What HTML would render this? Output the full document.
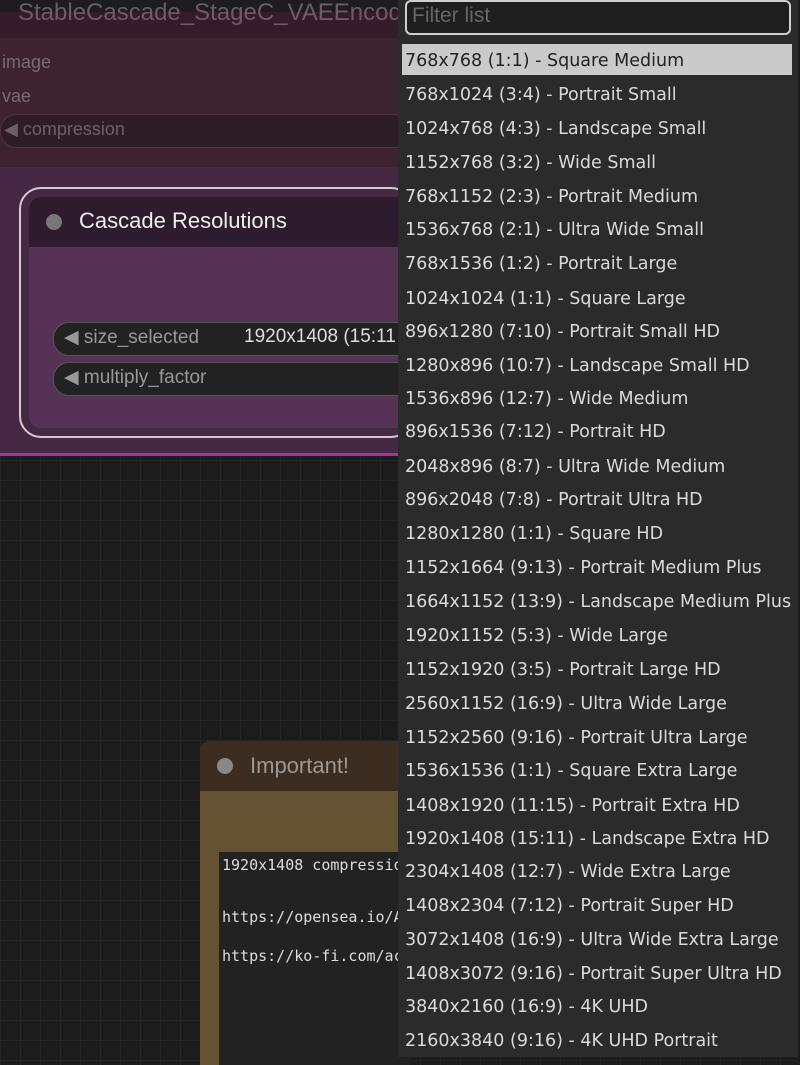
<!DOCTYPE html><html><head><style>
body{margin:0;width:800px;height:1065px;overflow:hidden;background:#1c1c1c;font-family:"Liberation Sans",sans-serif;position:relative;
background-image:linear-gradient(#262626 1px,transparent 1px),linear-gradient(90deg,#262626 1px,transparent 1px);background-size:20px 20px}
.a{position:absolute}
.menu div{position:absolute;left:7px;height:28px;line-height:28px;color:#dadada;white-space:nowrap;font-family:"DejaVu Sans","Liberation Sans",sans-serif;font-size:17.5px}
</style></head><body>
<div class="a" style="left:0;top:0;width:400px;height:12px;background:#1d1d1d"></div>
<div class="a" style="left:0;top:12px;width:400px;height:155px;background:#3d2230"></div>
<div class="a" style="left:0;top:12px;width:400px;height:26px;background:#361c2a"></div>
<div class="a" style="left:18px;top:-1px;font-size:24px;color:#6f5a66">StableCascade_StageC_VAEEncode</div>
<div class="a" style="left:2px;top:52px;font-size:18px;color:#7a6a72">image</div>
<div class="a" style="left:2px;top:86px;font-size:18px;color:#7a6a72">vae</div>
<div class="a" style="left:0;top:114px;width:410px;height:32px;border-radius:16px;background:#2f1d26;border:1px solid #4a3440"></div>
<div class="a" style="left:4px;top:119px;font-size:18px;color:#6f5e68">◀ compression</div>
<div class="a" style="left:0;top:167px;width:400px;height:288px;background:#462744"></div>
<div class="a" style="left:0;top:453px;width:400px;height:3px;background:#a0359a"></div>
<div class="a" style="left:19px;top:187px;width:390px;height:247px;border:2px solid #d4c8d2;border-radius:22px"></div>
<div class="a" style="left:29px;top:197px;width:380px;height:231px;border-radius:12px 0 0 12px;background:#563356"></div>
<div class="a" style="left:29px;top:197px;width:380px;height:50px;border-radius:12px 0 0 0;background:#2e1c2e"></div>
<div class="a" style="left:46px;top:214px;width:16px;height:16px;border-radius:50%;background:#777"></div>
<div class="a" style="left:79px;top:208px;font-size:22px;color:#eee">Cascade Resolutions</div>
<div class="a" style="left:53px;top:322px;width:360px;height:32px;border-radius:16px;background:#222;border:1px solid #555"></div>
<div class="a" style="left:64px;top:326px;font-size:19px;color:#999">◀ size_selected</div>
<div class="a" style="left:244px;top:326px;font-size:19px;color:#ddd">1920x1408 (15:11</div>
<div class="a" style="left:53px;top:362px;width:360px;height:32px;border-radius:16px;background:#222;border:1px solid #555"></div>
<div class="a" style="left:64px;top:366px;font-size:19px;color:#999">◀ multiply_factor</div>
<div class="a" style="left:200px;top:741px;width:210px;height:324px;border-radius:10px 0 0 0;background:#655233"></div>
<div class="a" style="left:200px;top:741px;width:210px;height:50px;border-radius:10px 0 0 0;background:#3d2d21"></div>
<div class="a" style="left:217px;top:758px;width:16px;height:16px;border-radius:50%;background:#888"></div>
<div class="a" style="left:250px;top:753px;font-size:22px;color:#999">Important!</div>
<div class="a" style="left:219px;top:852px;width:191px;height:213px;background:#222"></div>
<div class="a" style="left:222px;top:856px;font-family:'DejaVu Sans Mono',monospace;font-size:15px;color:#ddd;white-space:pre">1920x1408 compression</div>
<div class="a" style="left:222px;top:908px;font-family:'DejaVu Sans Mono',monospace;font-size:15px;color:#ddd;white-space:pre">https://opensea.io/AI</div>
<div class="a" style="left:222px;top:947px;font-family:'DejaVu Sans Mono',monospace;font-size:15px;color:#ddd;white-space:pre">https://ko-fi.com/ace</div>
<div class="a" style="left:398px;top:0;width:400px;height:1057px;background:#2b2b2b;border-right:1px solid #555"></div>
<div class="a" style="left:798px;top:0;width:2px;height:1065px;background:#1a1a1a"></div>
<div class="a" style="left:405px;top:0;width:382px;height:31px;background:#1e1e1e;border:2px solid #cfcfcf;border-radius:6px"></div>
<div class="a" style="left:412px;top:4px;font-size:21px;color:#666">Filter list</div>
<div class="a" style="left:402px;top:44px;width:390px;height:31px;background:#cacaca"></div>
<div class="a menu" style="left:398px;top:47px;width:400px">
<div style="top:0;color:#222">768x768 (1:1) - Square Medium</div>
<div style="top:34px">768x1024 (3:4) - Portrait Small</div>
<div style="top:68px">1024x768 (4:3) - Landscape Small</div>
<div style="top:102px">1152x768 (3:2) - Wide Small</div>
<div style="top:136px">768x1152 (2:3) - Portrait Medium</div>
<div style="top:169px">1536x768 (2:1) - Ultra Wide Small</div>
<div style="top:203px">768x1536 (1:2) - Portrait Large</div>
<div style="top:238px">1024x1024 (1:1) - Square Large</div>
<div style="top:271px">896x1280 (7:10) - Portrait Small HD</div>
<div style="top:305px">1280x896 (10:7) - Landscape Small HD</div>
<div style="top:338px">1536x896 (12:7) - Wide Medium</div>
<div style="top:371px">896x1536 (7:12) - Portrait HD</div>
<div style="top:406px">2048x896 (8:7) - Ultra Wide Medium</div>
<div style="top:439px">896x2048 (7:8) - Portrait Ultra HD</div>
<div style="top:473px">1280x1280 (1:1) - Square HD</div>
<div style="top:507px">1152x1664 (9:13) - Portrait Medium Plus</div>
<div style="top:541px">1664x1152 (13:9) - Landscape Medium Plus</div>
<div style="top:575px">1920x1152 (5:3) - Wide Large</div>
<div style="top:609px">1152x1920 (3:5) - Portrait Large HD</div>
<div style="top:643px">2560x1152 (16:9) - Ultra Wide Large</div>
<div style="top:677px">1152x2560 (9:16) - Portrait Ultra Large</div>
<div style="top:710px">1536x1536 (1:1) - Square Extra Large</div>
<div style="top:745px">1408x1920 (11:15) - Portrait Extra HD</div>
<div style="top:778px">1920x1408 (15:11) - Landscape Extra HD</div>
<div style="top:811px">2304x1408 (12:7) - Wide Extra Large</div>
<div style="top:845px">1408x2304 (7:12) - Portrait Super HD</div>
<div style="top:879px">3072x1408 (16:9) - Ultra Wide Extra Large</div>
<div style="top:913px">1408x3072 (9:16) - Portrait Super Ultra HD</div>
<div style="top:946px">3840x2160 (16:9) - 4K UHD</div>
<div style="top:980px">2160x3840 (9:16) - 4K UHD Portrait</div>
</div>
</body></html>
